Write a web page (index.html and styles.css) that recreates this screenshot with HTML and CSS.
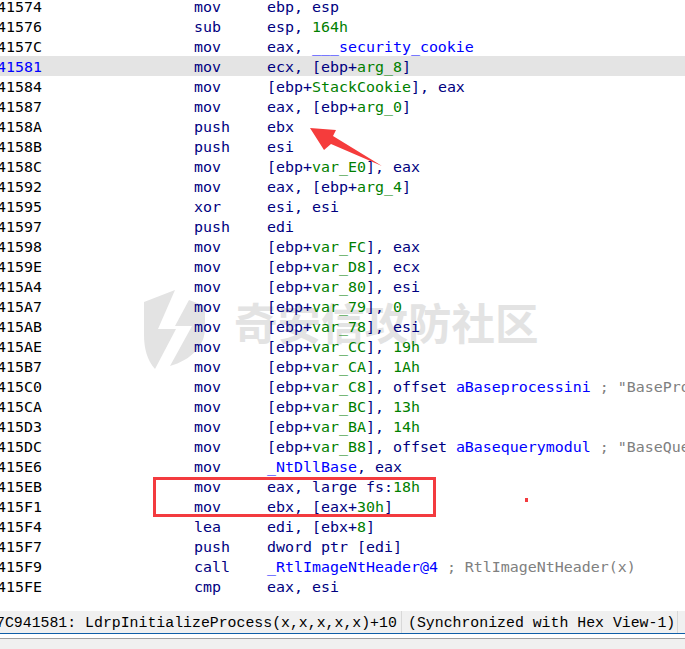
FILE: index.html
```html
<!DOCTYPE html>
<html lang="en">
<head>
<meta charset="utf-8">
<title>IDA View</title>
<link rel="stylesheet" href="styles.css">
</head>
<body>
<div class="app">
  <main class="listing">
    <div class="row"><span class="addr">41574</span><span class="mn">mov</span><span class="ops">ebp, esp</span></div>
    <div class="row"><span class="addr">41576</span><span class="mn">sub</span><span class="ops">esp, <i class="num">164h</i></span></div>
    <div class="row"><span class="addr">4157C</span><span class="mn">mov</span><span class="ops">eax, <i class="name">___security_cookie</i></span></div>
    <div class="row current"><span class="addr">41581</span><span class="mn">mov</span><span class="ops">ecx, [ebp+<i class="num">arg_8</i>]</span></div>
    <div class="row"><span class="addr">41584</span><span class="mn">mov</span><span class="ops">[ebp+<i class="num">StackCookie</i>], eax</span></div>
    <div class="row"><span class="addr">41587</span><span class="mn">mov</span><span class="ops">eax, [ebp+<i class="num">arg_0</i>]</span></div>
    <div class="row"><span class="addr">4158A</span><span class="mn">push</span><span class="ops">ebx</span></div>
    <div class="row"><span class="addr">4158B</span><span class="mn">push</span><span class="ops">esi</span></div>
    <div class="row"><span class="addr">4158C</span><span class="mn">mov</span><span class="ops">[ebp+<i class="num">var_E0</i>], eax</span></div>
    <div class="row"><span class="addr">41592</span><span class="mn">mov</span><span class="ops">eax, [ebp+<i class="num">arg_4</i>]</span></div>
    <div class="row"><span class="addr">41595</span><span class="mn">xor</span><span class="ops">esi, esi</span></div>
    <div class="row"><span class="addr">41597</span><span class="mn">push</span><span class="ops">edi</span></div>
    <div class="row"><span class="addr">41598</span><span class="mn">mov</span><span class="ops">[ebp+<i class="num">var_FC</i>], eax</span></div>
    <div class="row"><span class="addr">4159E</span><span class="mn">mov</span><span class="ops">[ebp+<i class="num">var_D8</i>], ecx</span></div>
    <div class="row"><span class="addr">415A4</span><span class="mn">mov</span><span class="ops">[ebp+<i class="num">var_80</i>], esi</span></div>
    <div class="row"><span class="addr">415A7</span><span class="mn">mov</span><span class="ops">[ebp+<i class="num">var_79</i>], <i class="num">0</i></span></div>
    <div class="row"><span class="addr">415AB</span><span class="mn">mov</span><span class="ops">[ebp+<i class="num">var_78</i>], esi</span></div>
    <div class="row"><span class="addr">415AE</span><span class="mn">mov</span><span class="ops">[ebp+<i class="num">var_CC</i>], <i class="num">19h</i></span></div>
    <div class="row"><span class="addr">415B7</span><span class="mn">mov</span><span class="ops">[ebp+<i class="num">var_CA</i>], <i class="num">1Ah</i></span></div>
    <div class="row"><span class="addr">415C0</span><span class="mn">mov</span><span class="ops">[ebp+<i class="num">var_C8</i>], offset <i class="name">aBaseprocessini</i> <i class="cmt">; "BasePro</i></span></div>
    <div class="row"><span class="addr">415CA</span><span class="mn">mov</span><span class="ops">[ebp+<i class="num">var_BC</i>], <i class="num">13h</i></span></div>
    <div class="row"><span class="addr">415D3</span><span class="mn">mov</span><span class="ops">[ebp+<i class="num">var_BA</i>], <i class="num">14h</i></span></div>
    <div class="row"><span class="addr">415DC</span><span class="mn">mov</span><span class="ops">[ebp+<i class="num">var_B8</i>], offset <i class="name">aBasequerymodul</i> <i class="cmt">; "BaseQue</i></span></div>
    <div class="row"><span class="addr">415E6</span><span class="mn">mov</span><span class="ops"><i class="name">_NtDllBase</i>, eax</span></div>
    <div class="row"><span class="addr">415EB</span><span class="mn">mov</span><span class="ops">eax, large fs:<i class="num">18h</i></span></div>
    <div class="row"><span class="addr">415F1</span><span class="mn">mov</span><span class="ops">ebx, [eax+<i class="num">30h</i>]</span></div>
    <div class="row"><span class="addr">415F4</span><span class="mn">lea</span><span class="ops">edi, [ebx+<i class="num">8</i>]</span></div>
    <div class="row"><span class="addr">415F7</span><span class="mn">push</span><span class="ops">dword ptr [edi]</span></div>
    <div class="row"><span class="addr">415F9</span><span class="mn">call</span><span class="ops"><i class="name">_RtlImageNtHeader@4</i> <i class="cmt">; RtlImageNtHeader(x)</i></span></div>
    <div class="row"><span class="addr">415FE</span><span class="mn">cmp</span><span class="ops">eax, esi</span></div>
  </main>
  <footer class="footer">
    <div class="status">
      <span class="cell location">7C941581: LdrpInitializeProcess(x,x,x,x,x)+10</span>
      <span class="cell sync">(Synchronized with Hex View-1)</span>
    </div>
    <div class="rule"></div>
    <div class="tray"></div>
  </footer>

  <div class="watermark">
    <svg class="shield" width="64" height="80" viewBox="0 0 64 80" aria-hidden="true">
      <path d="M1 12 L32 0 L15 39 L33 39 L12 79 C4 70 1 58 1 45 Z" />
      <path d="M46 10 L62 16 L62 38 C62 56 48 70 27 76 L49 36 L32 36 Z" />
    </svg>
    <span class="wm-text">奇安信攻防社区</span>
  </div>
  <svg class="arrow" width="685" height="200" viewBox="0 0 685 200" aria-hidden="true">
    <polygon points="310,128 336,130 333,136 382,166 331,144 324,150" />
  </svg>
  <div class="redbox"></div>
  <div class="reddot"></div>
</div>
</body>
</html>
```
FILE: styles.css
```css
* { box-sizing: border-box; }
html, body { margin: 0; padding: 0; height: 100%; background: #fff; }

.app {
  position: relative;
  width: 685px;
  height: 649px;
  overflow: hidden;
  display: flex;
  flex-direction: column;
  background: #fff;
}

.listing {
  position: relative;
  z-index: 1;
  height: 611px;
  margin-top: -4px;
  flex: none;
  font-family: "DejaVu Sans Mono", monospace;
  font-size: 14.95px;
  color: #000080;
}

.row {
  display: flex;
  height: 20px;
  line-height: 23px;
  white-space: pre;
}
.row i { font-style: normal; }
.row.current { background: #e4e4e4; }
.row.current .addr { color: #0000ff; }

.addr { width: 194px; flex: none; margin-left: -3px; margin-right: 3px; color: #000; }
.mn { width: 73px; flex: none; }
.ops { flex: none; }
.num { color: #008000; }
.name { color: #0000ff; }
.cmt { color: #808080; }

.footer { flex: 1; display: flex; flex-direction: column; margin-top: 4px; min-height: 0; }
.status {
  height: 23px;
  flex: none;
  display: flex;
  background: #f0f0f0;
  border-bottom: 1px solid #0f5ea8;
  font-family: "Liberation Mono", monospace;
  font-size: 14.85px;
  line-height: 24px;
  color: #000;
  white-space: pre;
}
.cell { display: block; height: 22px; border-right: 1px solid #d8d8d8; }
.location { width: 406px; margin-left: -4px; flex: none; }
.sync { width: 276px; padding-left: 6px; flex: none; }
.rule { height: 5px; flex: none; border-bottom: 1px solid #a0a0a0; background: #fff; }
.tray { flex: 1; background: #f0f0f0; }

.watermark {
  position: absolute;
  left: 143px;
  top: 290px;
  display: flex;
  align-items: center;
  gap: 27px;
  color: #e3e3e3;
}
.shield { fill: #e3e3e3; flex: none; }
.wm-text {
  font-family: "Noto Sans CJK SC", sans-serif;
  font-weight: 700;
  font-size: 43.5px;
  line-height: 64px;
  margin-bottom: 16px;
  white-space: nowrap;
}

.arrow { position: absolute; left: 0; top: 0; z-index: 2; fill: #f53c3c; }
.redbox {
  position: absolute;
  z-index: 2;
  left: 153px;
  top: 477px;
  width: 283px;
  height: 40px;
  border: 3px solid #f33b3f;
}
.reddot {
  position: absolute;
  z-index: 2;
  left: 525px;
  top: 498px;
  width: 3px;
  height: 4px;
  background: #f33b3f;
}
```
